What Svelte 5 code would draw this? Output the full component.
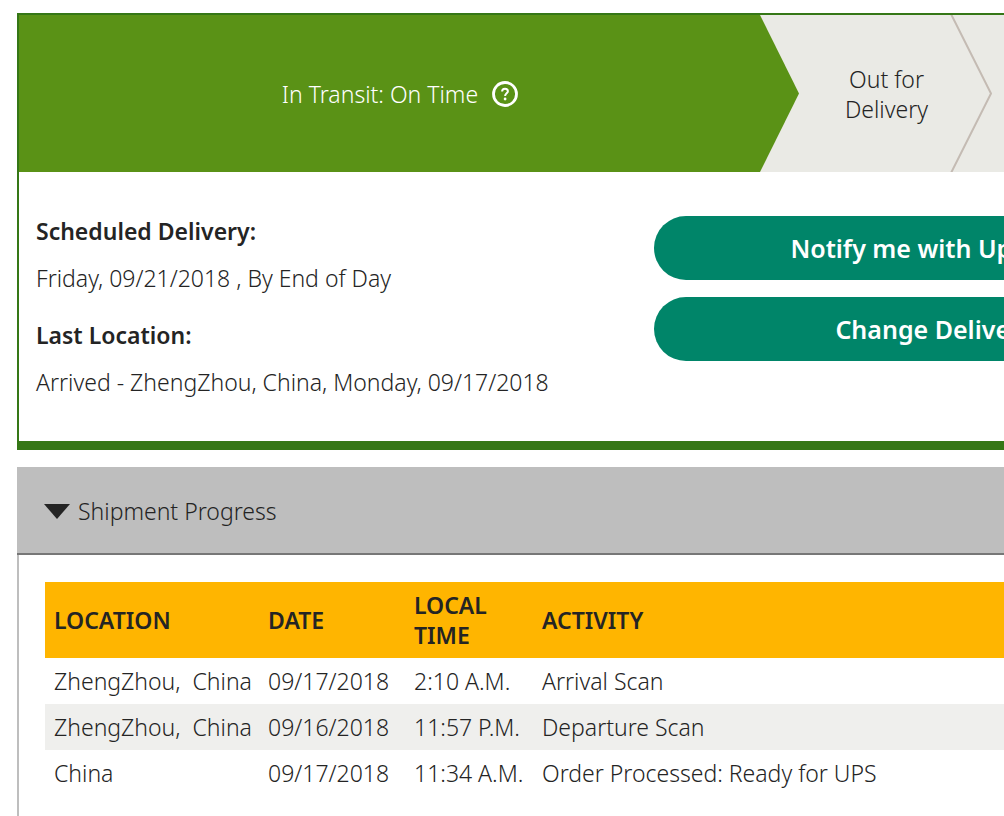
<script>
  let open = $state(true);

  const scans = [
    { location: 'ZhengZhou,\u00a0 China', date: '09/17/2018', time: '2:10 A.M.', activity: 'Arrival Scan' },
    { location: 'ZhengZhou,\u00a0 China', date: '09/16/2018', time: '11:57 P.M.', activity: 'Departure Scan' },
    { location: 'China', date: '09/17/2018', time: '11:34 A.M.', activity: 'Order Processed: Ready for UPS' }
  ];
</script>

<main class="page">
  <section class="card">
    <ol class="tracker">
      <li class="step current">
        <span>In Transit: On Time</span>
        <button class="help" type="button" aria-label="Help">
          <svg viewBox="0 0 26 26" width="26" height="26" aria-hidden="true">
            <circle cx="13" cy="13" r="11.5" fill="none" stroke="currentColor" stroke-width="2.8" />
            <path d="M10.1 10.6C10.1 8.8 11.3 7.8 13 7.8s2.9 1 2.9 2.5c0 2-2.8 2.1-2.8 4.7" fill="none" stroke="currentColor" stroke-width="2" />
            <circle cx="13.1" cy="18" r="1.4" fill="currentColor" />
          </svg>
        </button>
      </li>
      <li class="step">
        <span>Out for<br />Delivery</span>
        <svg class="chevron" viewBox="0 0 42 158" preserveAspectRatio="none" aria-hidden="true">
          <path d="M1 -1L41 79L1 159" fill="none" stroke="#c4bbb3" stroke-width="2" />
        </svg>
      </li>
      <li class="step"></li>
    </ol>

    <div class="summary">
      <dl>
        <dt>Scheduled Delivery:</dt>
        <dd>Friday, 09/21/2018 , By End of Day</dd>
        <dt>Last Location:</dt>
        <dd>Arrived - ZhengZhou, China, Monday, 09/17/2018</dd>
      </dl>
      <div class="actions">
        <button type="button">Notify me with Updates</button>
        <button type="button">Change Delivery</button>
      </div>
    </div>
  </section>

  <section class="progress">
    <h2>
      <button type="button" aria-expanded={open} onclick={() => (open = !open)}>
        <svg class:closed={!open} viewBox="0 0 26 15" width="26" height="15" aria-hidden="true">
          <path d="M0 0H26L13 15Z" fill="currentColor" />
        </svg>
        Shipment Progress
      </button>
    </h2>
    {#if open}
      <div class="panel">
        <table>
          <colgroup>
            <col class="c-location" />
            <col class="c-date" />
            <col class="c-time" />
            <col />
          </colgroup>
          <thead>
            <tr>
              <th scope="col">LOCATION</th>
              <th scope="col">DATE</th>
              <th scope="col">LOCAL TIME</th>
              <th scope="col">ACTIVITY</th>
            </tr>
          </thead>
          <tbody>
            {#each scans as scan}
              <tr>
                <td>{scan.location}</td>
                <td>{scan.date}</td>
                <td>{scan.time}</td>
                <td>{scan.activity}</td>
              </tr>
            {/each}
          </tbody>
        </table>
      </div>
    {/if}
  </section>
</main>

<style>
  :global(body) {
    background: #fff;
    overflow: hidden;
  }
  .page {
    box-sizing: border-box;
    min-width: 1252px;
    padding: 13px 17px 0;
    color: #242424;
    font-family: 'Noto Sans', 'Open Sans', sans-serif;
    font-size: 23px;
    font-weight: 300;
    line-height: 30px;
  }
  button {
    font: inherit;
    color: inherit;
    border: 0;
    padding: 0;
    background: none;
    cursor: pointer;
  }
  .card {
    border: 2px solid #357716;
    border-bottom-width: 9px;
  }
  .tracker {
    display: grid;
    grid-template-columns: 780fr 193fr 241fr;
    margin: 0;
    padding: 0;
    list-style: none;
    background: #eaeae5;
    text-align: center;
  }
  .step {
    position: relative;
    box-sizing: border-box;
    min-height: 157px;
    padding-right: 18px;
    display: flex;
    align-items: center;
    justify-content: center;
    gap: 14px;
  }
  .current {
    background: #5a9216;
    color: #fff;
    clip-path: polygon(0 0, calc(100% - 39px) 0, 100% 50%, calc(100% - 39px) 100%, 0 100%);
  }
  .help {
    display: flex;
  }
  .chevron {
    position: absolute;
    top: 0;
    right: 0;
    width: 42px;
    height: 100%;
  }
  .summary {
    display: grid;
    grid-template-columns: 1fr 1fr;
    gap: 56px;
    padding: 44px 17px;
  }
  dl,
  dd {
    margin: 0;
  }
  dt {
    font-weight: 600;
    margin-bottom: 17px;
  }
  dd + dt {
    margin-top: 27px;
  }
  .actions {
    display: flex;
    flex-direction: column;
    gap: 17px;
  }
  .actions button {
    padding: 17px;
    border-radius: 32px;
    background: #008569;
    color: #fff;
    font-size: 25px;
    font-weight: 600;
  }
  .progress {
    margin-top: 17px;
  }
  h2 {
    margin: 0;
    font: inherit;
    background: #bebebe;
    border-bottom: 2px solid #777;
  }
  h2 button {
    display: flex;
    align-items: center;
    gap: 8px;
    width: 100%;
    padding: 29px 27px 27px;
  }
  .closed {
    transform: rotate(-90deg);
  }
  .panel {
    padding: 27px 26px 40px;
    border: 2px solid #bebebe;
    border-top: 0;
  }
  table {
    width: 100%;
    border-collapse: collapse;
    table-layout: fixed;
    text-align: left;
  }
  .c-location {
    width: 214px;
  }
  .c-date {
    width: 146px;
  }
  .c-time {
    width: 128px;
  }
  th,
  td {
    padding: 8px 0 8px 9px;
    white-space: nowrap;
  }
  th {
    white-space: normal;
    font-weight: 600;
    background: #ffb500;
  }
  tbody tr:nth-child(even) {
    background: #efefed;
  }
</style>
